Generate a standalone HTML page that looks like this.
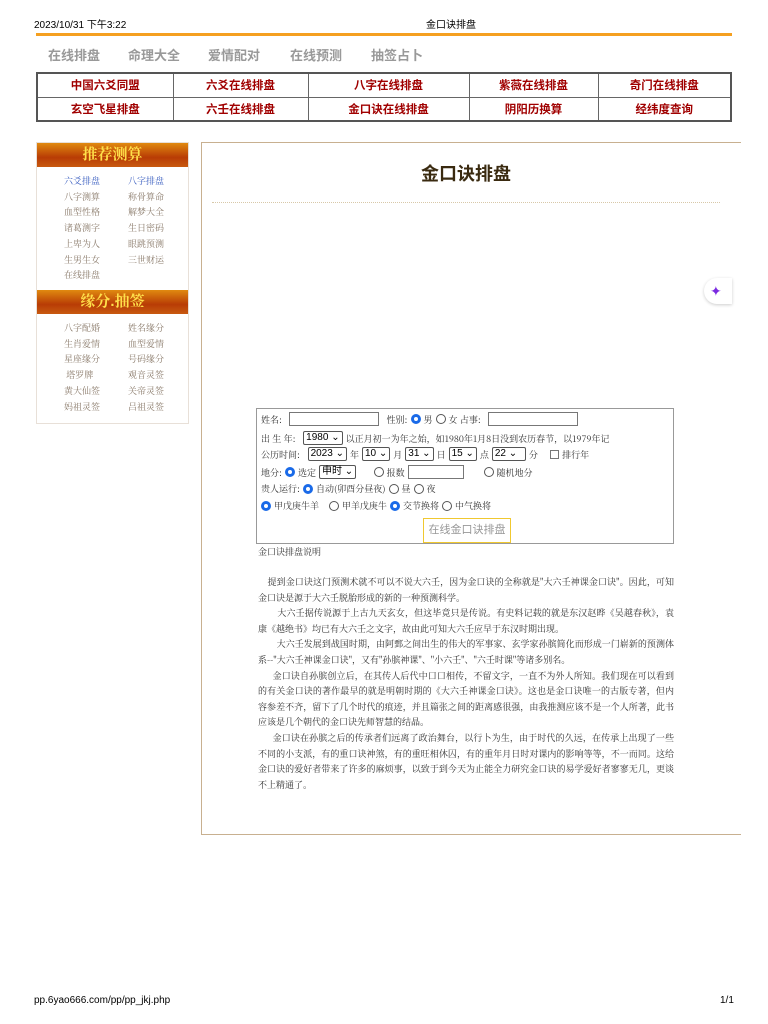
<!DOCTYPE html>
<html><head><meta charset="utf-8"><style>
*{margin:0;padding:0;box-sizing:border-box}
body{width:768px;height:1024px;background:#fff;position:relative;font-family:"Liberation Sans","Noto Sans CJK SC",sans-serif;overflow:hidden}
.a{position:absolute;white-space:nowrap}
.sm{font-size:10px;color:#000}
.nav{font-size:13px;color:#999;font-weight:bold;top:45px}
table.top{position:absolute;left:36px;top:72px;width:696px;height:50px;border-collapse:collapse;border:2px solid #555}
table.top td{border:1px solid #666;text-align:center;font-size:11.5px;font-weight:bold;color:#a00000;height:24px}
.ban{position:absolute;left:37px;width:151px;height:24px;background:linear-gradient(#e08a10,#b83c05 60%,#c85a10);color:#ffe04a;font-size:15px;font-weight:bold;text-align:center;line-height:24px;font-family:"Liberation Sans","Noto Serif CJK SC",serif}
.lk{position:absolute;font-size:9px;color:#8a7a6a;font-family:"Noto Serif CJK SC",serif;line-height:15.7px}
.serif{font-family:"Liberation Serif","Noto Serif CJK SC",serif}
.form{position:absolute;left:256px;top:408px;width:418px;height:136px;border:1px solid #999}
.row{position:absolute;left:4px;font-size:9px;font-family:"Noto Serif CJK SC",serif;color:#333;display:flex;align-items:center;gap:3px;white-space:nowrap}
.sel{display:inline-block;border:1px solid #555;border-radius:2px;font-family:"Liberation Sans",sans-serif;font-size:10px;height:14px;line-height:12px;padding:0 2px;color:#000}
.rad{display:inline-block;width:10px;height:10px;border-radius:50%;border:1px solid #555}
.rad.on{border:3px solid #1a6ae8}
.inp{display:inline-block;border:1px solid #777;height:14px}
.p{position:absolute;left:258px;width:416px;font-size:9px;line-height:15.6px;color:#333;font-family:"Noto Serif CJK SC",serif;text-align:justify}
</style></head><body>
<div class="a sm" style="left:34px;top:16px;font-size:10px">2023/10/31 下午3:22</div>
<div class="a sm" style="left:426px;top:16px;font-size:10px">金口诀排盘</div>
<div class="a" style="left:36px;top:33px;width:696px;height:3px;background:#f5a020"></div>
<div class="a nav" style="left:48px">在线排盘</div>
<div class="a nav" style="left:128px">命理大全</div>
<div class="a nav" style="left:208px">爱情配对</div>
<div class="a nav" style="left:290px">在线预测</div>
<div class="a nav" style="left:371px">抽签占卜</div>
<table class="top"><tr><td style="width:136px">中国六爻同盟</td><td style="width:135px">六爻在线排盘</td><td style="width:161px">八字在线排盘</td><td style="width:129px">紫薇在线排盘</td><td>奇门在线排盘</td></tr>
<tr><td>玄空飞星排盘</td><td>六壬在线排盘</td><td>金口诀在线排盘</td><td>阴阳历换算</td><td>经纬度查询</td></tr></table>

<div class="a" style="left:36px;top:142px;width:153px;height:282px;border:1px solid #e8e0d8"></div>
<div class="ban" style="top:143px">推荐测算</div>
<div class="lk" style="left:64px;top:173px"><span style="color:#3a5ec0">六爻排盘</span><br>八字测算<br>血型性格<br>诸葛测字<br>上卑为人<br>生男生女<br>在线排盘</div>
<div class="lk" style="left:128px;top:173px"><span style="color:#3a5ec0">八字排盘</span><br>称骨算命<br>解梦大全<br>生日密码<br>眼跳预测<br>三世财运</div>
<div class="ban" style="top:290px">缘分.抽签</div>
<div class="lk" style="left:64px;top:320px">八字配婚<br>生肖爱情<br>星座缘分<br>&nbsp;塔罗牌<br>黄大仙签<br>妈祖灵签</div>
<div class="lk" style="left:128px;top:320px">姓名缘分<br>血型爱情<br>号码缘分<br>观音灵签<br>关帝灵签<br>吕祖灵签</div>

<div class="a" style="left:201px;top:142px;width:540px;height:693px;border:1px solid #c8b090;border-right:none"></div>
<div class="a" style="left:421px;top:160px;font-size:18px;font-weight:bold;color:#3a2a10">金口诀排盘</div>
<div class="a" style="left:212px;top:202px;width:508px;border-top:1px dotted #d8c8a8"></div>
<div class="a" style="left:704px;top:278px;width:28px;height:26px;background:#fff;border-radius:13px 0 0 13px;box-shadow:0 1px 3px rgba(0,0,0,.2);color:#7a2ae0;font-size:14px;line-height:26px;padding-left:6px">✦</div>

<div class="form">
<div class="row" style="top:3px">姓名: <span class="inp" style="width:90px;margin-left:4px"></span>&nbsp; 性别: <span class="rad on"></span>男 <span class="rad"></span> 女 占事: <span class="inp" style="width:90px;margin-left:4px"></span></div>
<div class="row" style="top:22px">出 生 年: &nbsp;<span class="sel">1980 ⌄</span> 以正月初一为年之始，如1980年1月8日没到农历春节，以1979年记</div>
<div class="row" style="top:38px">公历时间: &nbsp;<span class="sel">2023 ⌄</span>年 <span class="sel">10 ⌄</span>月 <span class="sel">31 ⌄</span>日 <span class="sel">15 ⌄</span>点 <span class="sel" style="width:34px">22 ⌄</span>分 &nbsp;&nbsp;&nbsp;<span class="inp" style="width:9px;height:9px"></span>排行年</div>
<div class="row" style="top:56px">地分: <span class="rad on"></span> 选定 <span class="sel">申时 ⌄</span> &nbsp;&nbsp;&nbsp;&nbsp;&nbsp;<span class="rad"></span> 报数 <span class="inp" style="width:56px"></span> &nbsp;&nbsp;&nbsp;&nbsp;&nbsp;&nbsp;<span class="rad"></span> 随机地分</div>
<div class="row" style="top:73px">贵人运行: <span class="rad on"></span> 自动(卯酉分昼夜)<span class="rad"></span>昼 <span class="rad"></span>夜</div>
<div class="row" style="top:90px"><span class="rad on"></span> 甲戊庚牛羊 &nbsp;&nbsp;<span class="rad"></span> 甲羊戊庚牛 <span class="rad on"></span>交节换将 <span class="rad"></span>中气换将</div>
<div class="a" style="left:166px;top:109px;width:88px;height:25px;border:1px solid #f0c830;font-size:11px;color:#999;text-align:center;line-height:23px">在线金口诀排盘</div>
</div>
<div class="a" style="left:258px;top:545px;font-size:9px;color:#333;font-family:'Noto Serif CJK SC',serif">金口诀排盘说明</div>

<div class="p" style="top:574px">&nbsp;&nbsp;&nbsp;&nbsp;提到金口诀这门预测术就不可以不说大六壬，因为金口诀的全称就是"大六壬神课金口诀"。因此，可知金口诀是源于大六壬脱胎形成的新的一种预测科学。<br>
&nbsp;&nbsp;&nbsp;&nbsp;&nbsp;&nbsp;&nbsp;&nbsp;大六壬据传说源于上古九天玄女，但这毕竟只是传说。有史料记载的就是东汉赵晔《吴越春秋》，袁康《越绝书》均已有大六壬之文字，故由此可知大六壬应早于东汉时期出现。<br>
&nbsp;&nbsp;&nbsp;&nbsp;&nbsp;&nbsp;&nbsp;&nbsp;大六壬发展到战国时期，由阿鄄之间出生的伟大的军事家、玄学家孙膑简化而形成一门崭新的预测体系--"大六壬神课金口诀"，又有"孙膑神课"、"小六壬"、"六壬时课"等诸多别名。<br>
&nbsp;&nbsp;&nbsp;&nbsp;&nbsp;&nbsp;金口诀自孙膑创立后，在其传人后代中口口相传，不留文字，一直不为外人所知。我们现在可以看到的有关金口诀的著作最早的就是明朝时期的《大六壬神课金口诀》。这也是金口诀唯一的古版专著，但内容参差不齐，留下了几个时代的痕迹，并且篇张之间的距离感很强，由我推测应该不是一个人所著，此书应该是几个朝代的金口诀先师智慧的结晶。<br>
&nbsp;&nbsp;&nbsp;&nbsp;&nbsp;&nbsp;金口诀在孙膑之后的传承者们远离了政治舞台，以行卜为生，由于时代的久远，在传承上出现了一些不同的小支派，有的重口诀神煞，有的重旺相休囚，有的重年月日时对课内的影响等等，不一而同。这给金口诀的爱好者带来了许多的麻烦事，以致于到今天为止能全力研究金口诀的易学爱好者寥寥无几，更谈不上精通了。</div>

<div class="a sm" style="left:34px;top:995px">pp.6yao666.com/pp/pp_jkj.php</div>
<div class="a sm" style="left:720px;top:995px">1/1</div>
</body></html>
